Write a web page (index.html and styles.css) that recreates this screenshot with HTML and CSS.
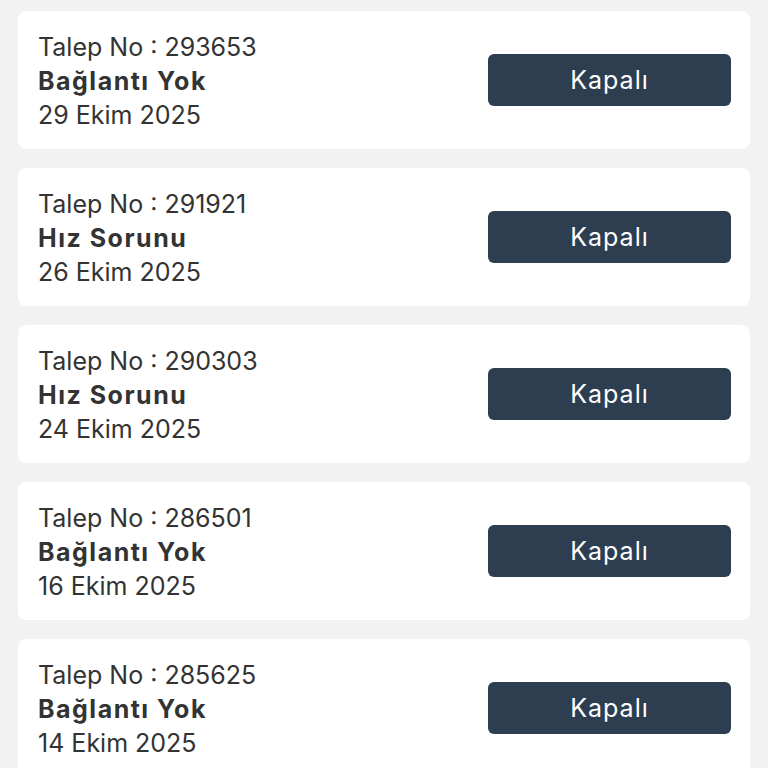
FILE: index.html
```html
<!DOCTYPE html>
<html lang="tr">
<head>
    <meta charset="UTF-8">
    <meta name="viewport" content="width=device-width, initial-scale=1.0">
    <title>Taleplerim</title>
    <link rel="stylesheet" href="styles.css">
</head>
<body>

    <!-- talep listesi -->
    <ul class="ticket-list">
        <li class="ticket">
            <div class="ticket-info">
                <div class="ticket-no">Talep No : 293653</div>
                <div class="ticket-title">Bağlantı Yok</div>
                <div class="ticket-date">29 Ekim 2025</div>
            </div>
            <button class="btn-status">Kapalı</button>
        </li>

        <li class="ticket">
            <div class="ticket-info">
                <div class="ticket-no">Talep No : 291921</div>
                <div class="ticket-title">Hız Sorunu</div>
                <div class="ticket-date">26 Ekim 2025</div>
            </div>
            <button class="btn-status">Kapalı</button>
        </li>

        <li class="ticket">
            <div class="ticket-info">
                <div class="ticket-no">Talep No : 290303</div>
                <div class="ticket-title">Hız Sorunu</div>
                <div class="ticket-date">24 Ekim 2025</div>
            </div>
            <button class="btn-status">Kapalı</button>
        </li>

        <li class="ticket">
            <div class="ticket-info">
                <div class="ticket-no">Talep No : 286501</div>
                <div class="ticket-title">Bağlantı Yok</div>
                <div class="ticket-date">16 Ekim 2025</div>
            </div>
            <button class="btn-status">Kapalı</button>
        </li>

        <li class="ticket">
            <div class="ticket-info">
                <div class="ticket-no">Talep No : 285625</div>
                <div class="ticket-title">Bağlantı Yok</div>
                <div class="ticket-date">14 Ekim 2025</div>
            </div>
            <button class="btn-status">Kapalı</button>
        </li>
    </ul>

</body>
</html>
```

FILE: styles.css
```css
body {
    margin: 0;
    background-color: #f2f2f2;
    font-family: "Inter", "Noto Sans", sans-serif;
    color: #333333;
}
.ticket-list {
    list-style: none;
    margin: 0;
    padding: 11px 18px;
    display: flex;
    flex-direction: column;
    gap: 19px;
}
.ticket {
    height: 138px;
    box-sizing: border-box;
    padding: 0 19px 0 20px;
    background-color: #fff;
    border-radius: 8px;
    display: flex;
    align-items: center;
    justify-content: space-between;
}
.ticket-info {
    padding-top: 2px;
    font-size: 25px;
    line-height: 34px;
}
.ticket-title {
    font-weight: bold;
    letter-spacing: 1.5px;
}
.btn-status {
    width: 243px;
    height: 52px;
    border: 0;
    border-radius: 6px;
    background-color: #2c3e50;
    color: #fff;
    font-family: inherit;
    font-size: 25px;
    letter-spacing: 1px;
}
```
